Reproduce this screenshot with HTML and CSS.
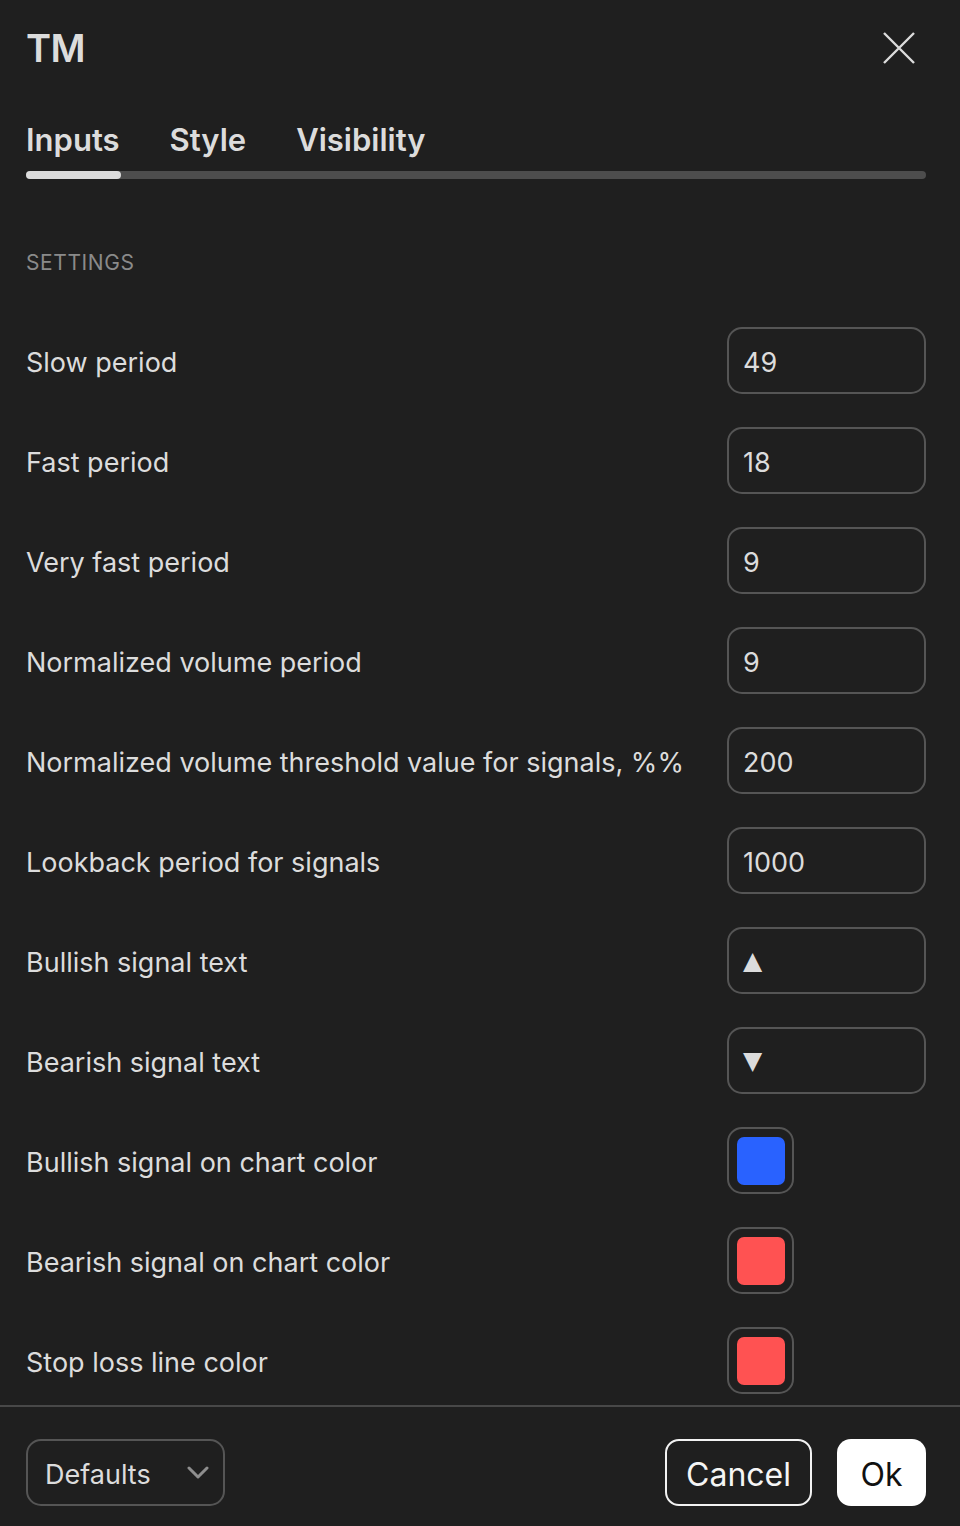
FILE: index.html
```html
<!DOCTYPE html>
<html lang="en">
<head>
<meta charset="utf-8">
<title>TM</title>
<link rel="stylesheet" href="styles.css">
</head>
<body>
<div class="dialog">
  <div class="header">
    <h1 class="title">TM</h1>
    <button class="close" aria-label="Close">
      <svg width="34" height="34" viewBox="0 0 34 34"><path d="M2 2 L32 32 M32 2 L2 32" stroke="#dcdcdc" stroke-width="2.4" fill="none"/></svg>
    </button>
  </div>
  <div class="tabs">
    <div class="tab-labels">
      <span class="tab active">Inputs</span>
      <span class="tab">Style</span>
      <span class="tab">Visibility</span>
    </div>
    <div class="tab-track"><div class="tab-indicator"></div></div>
  </div>
  <div class="content">
    <div class="section-title">SETTINGS</div>
    <div class="rows">
      <div class="row"><span class="label">Slow period</span><div class="field">49</div></div>
      <div class="row"><span class="label">Fast period</span><div class="field">18</div></div>
      <div class="row"><span class="label">Very fast period</span><div class="field">9</div></div>
      <div class="row"><span class="label">Normalized volume period</span><div class="field">9</div></div>
      <div class="row"><span class="label">Normalized volume threshold value for signals, %%</span><div class="field">200</div></div>
      <div class="row"><span class="label">Lookback period for signals</span><div class="field">1000</div></div>
      <div class="row"><span class="label">Bullish signal text</span><div class="field"><span class="tri">▲</span></div></div>
      <div class="row"><span class="label">Bearish signal text</span><div class="field"><span class="tri">▼</span></div></div>
      <div class="row"><span class="label">Bullish signal on chart color</span><div class="swatch-box"><div class="swatch blue"></div></div></div>
      <div class="row"><span class="label">Bearish signal on chart color</span><div class="swatch-box"><div class="swatch red"></div></div></div>
      <div class="row"><span class="label">Stop loss line color</span><div class="swatch-box"><div class="swatch red"></div></div></div>
    </div>
  </div>
  <div class="footer">
    <div class="select">
      <span>Defaults</span>
      <svg width="22" height="14" viewBox="0 0 22 14"><path d="M2 2 L11 11 L20 2" stroke="#8e8e8e" stroke-width="3" fill="none" stroke-linecap="round" stroke-linejoin="round"/></svg>
    </div>
    <div class="actions">
      <button class="btn cancel">Cancel</button>
      <button class="btn ok">Ok</button>
    </div>
  </div>
</div>
</body>
</html>
```

FILE: styles.css
```css
* { box-sizing: border-box; }
html, body { margin: 0; padding: 0; }
body {
  background: #1f1f1f;
  font-family: Inter, "Noto Sans", "Liberation Sans", sans-serif;
  color: #dcdcdc;
}
.dialog {
  width: 960px;
  height: 1526px;
  display: flex;
  flex-direction: column;
  overflow: hidden;
}
.header {
  display: flex;
  justify-content: space-between;
  align-items: center;
  padding: 24px 44px 0 26px;
  height: 72px;
}
.title {
  margin: 0;
  font-size: 38px;
  line-height: 48px;
  font-weight: 600;
  letter-spacing: -0.5px;
  color: #dcdcdc;
}
.close {
  background: none;
  border: 0;
  padding: 0;
  width: 34px;
  height: 34px;
  display: flex;
}
.tabs {
  margin: 48px 34px 0 26px;
}
.tab-labels {
  display: flex;
  gap: 50px;
  height: 40px;
  align-items: center;
}
.tab {
  font-size: 31px;
  line-height: 40px;
  font-weight: 600;
  color: #dcdcdc;
}
.tab-track {
  margin-top: 11px;
  height: 8px;
  border-radius: 4px;
  background: #4d4d4d;
}
.tab-indicator {
  width: 95px;
  height: 8px;
  border-radius: 4px;
  background: #dcdcdc;
}
.content {
  flex: 1;
  padding: 0 34px 0 26px;
  overflow: hidden;
}
.section-title {
  margin-top: 70px;
  font-size: 21px;
  line-height: 28px;
  letter-spacing: 0.6px;
  color: #8a8a8a;
}
.rows {
  margin-top: 50px;
  display: flex;
  flex-direction: column;
  gap: 33px;
}
.row {
  display: flex;
  justify-content: space-between;
  align-items: center;
  height: 67px;
}
.label {
  font-size: 27px;
  line-height: 34px;
  padding-top: 4px;
  color: #dcdcdc;
}
.field {
  width: 199px;
  height: 67px;
  border: 2px solid #555;
  border-radius: 15px;
  padding: 4px 14px 0;
  display: flex;
  align-items: center;
  font-size: 27px;
  color: #dcdcdc;
}
.tri {
  font-family: "DejaVu Sans", sans-serif;
  font-size: 25px;
  margin-top: -4px;
}
.swatch-box {
  width: 67px;
  height: 67px;
  border: 2px solid #555;
  border-radius: 15px;
  display: flex;
  align-items: center;
  justify-content: center;
  margin-right: 132px;
}
.swatch {
  width: 48px;
  height: 48px;
  border-radius: 7px;
}
.swatch.blue { background: #2962ff; }
.swatch.red { background: #ff5252; }
.footer {
  border-top: 2px solid #484848;
  height: 121px;
  padding: 32px 34px 0 26px;
  display: flex;
  justify-content: space-between;
  align-items: flex-start;
}
.select {
  width: 199px;
  height: 67px;
  border: 2px solid #555;
  border-radius: 15px;
  display: flex;
  align-items: center;
  justify-content: space-between;
  padding: 3px 14px 0 17px;
  font-size: 27px;
  color: #dcdcdc;
}
.select svg { margin-top: -3px; }
.actions {
  display: flex;
  gap: 25px;
}
.btn {
  height: 67px;
  border-radius: 14px;
  font-family: Inter, "Noto Sans", sans-serif;
  font-size: 32px;
  padding: 3px 0 0;
}
.cancel {
  width: 147px;
  background: transparent;
  border: 2px solid #f2f2f2;
  color: #f5f5f5;
}
.ok {
  width: 89px;
  background: #ffffff;
  border: 0;
  color: #111;
}
```
